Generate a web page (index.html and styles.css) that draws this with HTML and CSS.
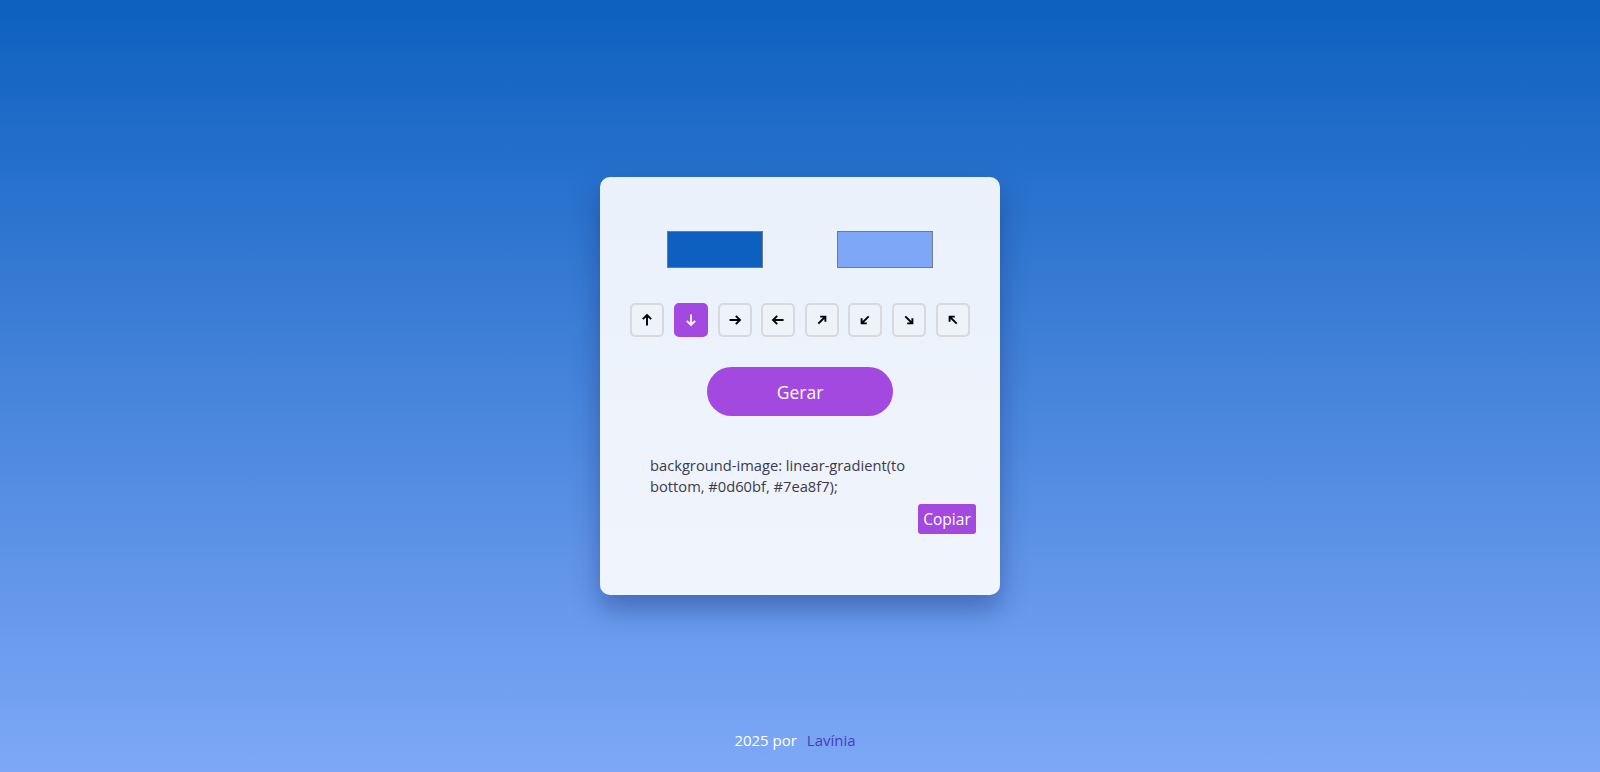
FILE: index.html
```html
<!DOCTYPE html>
<html lang="pt-BR">
<head>
<meta charset="utf-8">
<title>Gerador de Gradiente</title>
<link rel="stylesheet" href="styles.css">
</head>
<body>
<main class="page">
  <section class="card">
    <div class="colors">
      <div class="swatch swatch-a"></div>
      <div class="swatch swatch-b"></div>
    </div>
    <div class="directions">
      <button class="dir"><svg viewBox="0 0 14 14"><path d="M7 12.5V2M2.8 6.2L7 2L11.2 6.2"/></svg></button>
      <button class="dir active"><svg viewBox="0 0 14 14"><path d="M7 1.5V12M2.8 7.8L7 12L11.2 7.8"/></svg></button>
      <button class="dir"><svg viewBox="0 0 14 14"><path d="M1.5 7H12M7.8 2.8L12 7L7.8 11.2"/></svg></button>
      <button class="dir"><svg viewBox="0 0 14 14"><path d="M12.5 7H2M6.2 2.8L2 7L6.2 11.2"/></svg></button>
      <button class="dir"><svg viewBox="0 0 14 14"><path d="M3.3 10.7L10 4M5.2 3.6H10.4V8.8"/></svg></button>
      <button class="dir"><svg viewBox="0 0 14 14"><path d="M10.7 3.3L4 10M3.6 5.2V10.4H8.8"/></svg></button>
      <button class="dir"><svg viewBox="0 0 14 14"><path d="M3.3 3.3L10 10M10.4 5.2V10.4H5.2"/></svg></button>
      <button class="dir"><svg viewBox="0 0 14 14"><path d="M10.7 10.7L4 4M8.8 3.6H3.6V8.8"/></svg></button>
    </div>
    <button class="generate">Gerar</button>
    <div class="result">
      <p class="code">background-image: linear-gradient(to bottom, #0d60bf, #7ea8f7);</p>
      <button class="copy">Copiar</button>
    </div>
  </section>
</main>
<footer class="footer">2025 por <a class="author" href="#">Lavínia</a></footer>
</body>
</html>
```

FILE: styles.css
```css
* { box-sizing: border-box; }
html, body { height: 100%; }
body {
  margin: 0;
  min-height: 772px;
  display: flex;
  flex-direction: column;
  font-family: "Open Sans", "DejaVu Sans", sans-serif;
  background-image: linear-gradient(to bottom, #0d60bf, #7ea8f7);
}
.page {
  flex: 1;
  display: flex;
  align-items: center;
  justify-content: center;
}
.card {
  width: 400px;
  height: 418px;
  margin-top: 42px;
  border-radius: 10px;
  background-image: linear-gradient(to bottom, #eaf1fb, #f0f4fc);
  box-shadow: 0 14px 28px rgba(20, 40, 110, 0.4);
  display: flex;
  flex-direction: column;
  align-items: center;
  padding-top: 54px;
}
.colors {
  display: flex;
  gap: 74px;
}
.swatch {
  width: 96px;
  height: 37px;
  border: 1px solid #707a88;
}
.swatch-a { background: #0d60bf; }
.swatch-b { background: #7ea8f7; }
.directions {
  display: flex;
  gap: 9.6px;
  margin-top: 35px;
}
.dir {
  width: 34px;
  height: 34px;
  padding: 0;
  border: 2px solid #d7d9de;
  border-radius: 5px;
  background: #eef2f9;
  display: flex;
  align-items: center;
  justify-content: center;
  cursor: pointer;
}
.dir svg {
  width: 14px;
  height: 14px;
  fill: none;
  stroke: #000;
  stroke-width: 1.9;
  stroke-linecap: butt;
  stroke-linejoin: miter;
}
.dir.active {
  background: #a349e0;
  border-color: #a349e0;
}
.dir.active svg { stroke: #fff; }
.generate {
  margin-top: 30px;
  width: 186px;
  height: 49px;
  border: none;
  border-radius: 25px;
  background: #a349e0;
  color: #fff;
  font-family: inherit;
  font-size: 17.5px;
  cursor: pointer;
}
.result {
  align-self: stretch;
  display: flex;
  flex-direction: column;
  padding: 0 24px;
  margin-top: 39px;
}
.code {
  width: 285px;
  margin: 0 0 0 26px;
  font-size: 14.7px;
  line-height: 21px;
  color: #3a3a4c;
}
.copy {
  align-self: flex-end;
  margin-top: 7px;
  width: 58px;
  height: 30px;
  padding: 0;
  border: none;
  border-radius: 3px;
  background: #a349e0;
  color: #fff;
  font-family: inherit;
  font-size: 15.5px;
  cursor: pointer;
}
.footer {
  text-align: center;
  color: #fff;
  font-size: 15px;
  padding-bottom: 22px;
  padding-right: 10px;
}
.author {
  color: #4a3bbd;
  text-decoration: none;
  margin-left: 6px;
}
```
